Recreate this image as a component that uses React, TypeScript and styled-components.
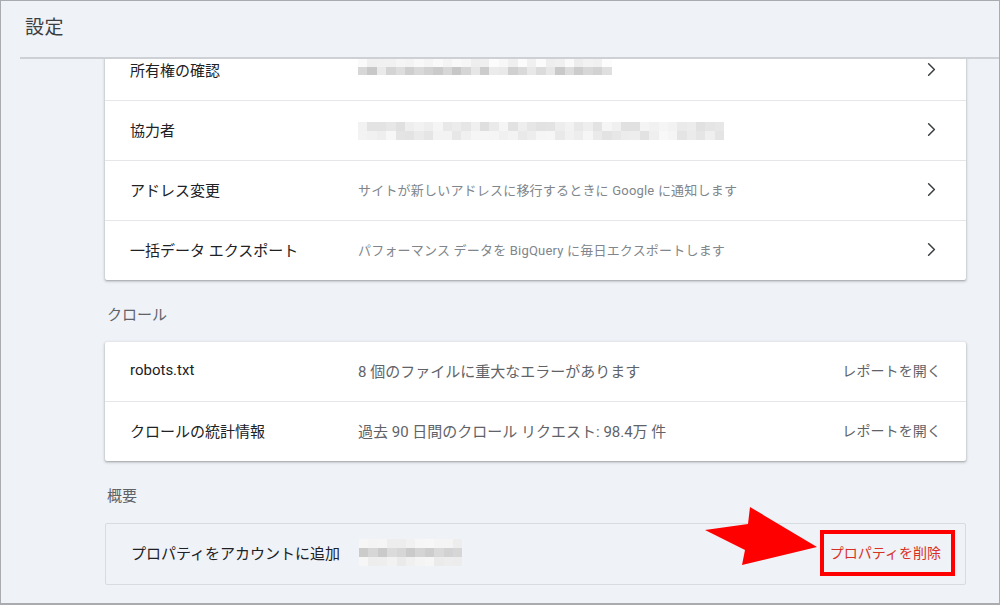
import React from 'react';
import styled, { createGlobalStyle } from 'styled-components';
import { ChevronRight } from 'lucide-react';

const GlobalStyle = createGlobalStyle`
  html, body {
    margin: 0;
    padding: 0;
    background: #eff2f7;
  }
  * {
    box-sizing: border-box;
  }
  body {
    font-family: Roboto, "Noto Sans CJK JP", "Noto Sans", sans-serif;
    -webkit-font-smoothing: antialiased;
  }
`;

// deterministic grey shades for the pixelated (blurred out) values
const shadeAt = (seed: number, i: number, lo: number, hi: number) => {
  const x = Math.sin(seed * 97.13 + i * 12.9898) * 43758.5453;
  const r = x - Math.floor(x);
  return Math.round(lo + r * (hi - lo));
};

type MosaicProps = {
  seed: number;
  cols: number;
  rows: { lo: number; hi: number }[];
  cell?: number;
  rowHeight?: number;
  offset?: number;
};

const Mosaic: React.FC<MosaicProps> = ({
  seed,
  cols,
  rows,
  cell = 9.4,
  rowHeight = 9,
  offset = 0,
}) => (
  <MosaicBox $offset={offset}>
    {rows.map((r, ri) => (
      <MosaicRow key={ri}>
        {Array.from({ length: cols }).map((_, ci) => {
          const g = shadeAt(seed + ri * 7, ci, r.lo, r.hi);
          return (
            <MosaicCell
              key={ci}
              style={{
                width: cell,
                height: rowHeight,
                background: `rgb(${g},${g},${g + 1})`,
              }}
            />
          );
        })}
      </MosaicRow>
    ))}
  </MosaicBox>
);

type SettingRow = { label: string; desc?: string; mosaic?: React.ReactNode };

const propertyRows: SettingRow[] = [
  {
    label: '所有権の確認',
    mosaic: (
      <Mosaic
        seed={3}
        cols={27}
        offset={-4}
        rows={[
          { lo: 236, hi: 252 },
          { lo: 196, hi: 236 },
        ]}
        rowHeight={8}
      />
    ),
  },
  {
    label: '協力者',
    mosaic: (
      <Mosaic
        seed={11}
        cols={39}
        offset={3}
        rows={[
          { lo: 222, hi: 246 },
          { lo: 226, hi: 248 },
        ]}
      />
    ),
  },
  {
    label: 'アドレス変更',
    desc: 'サイトが新しいアドレスに移行するときに Google に通知します',
  },
  {
    label: '一括データ エクスポート',
    desc: 'パフォーマンス データを BigQuery に毎日エクスポートします',
  },
];

const crawlRows = [
  { label: 'robots.txt', value: '8 個のファイルに重大なエラーがあります' },
  {
    label: 'クロールの統計情報',
    value: '過去 90 日間のクロール リクエスト: 98.4万 件',
  },
];

export default function App() {
  return (
    <>
      <GlobalStyle />
      <Frame>
        <Header>
          <PageTitle>設定</PageTitle>
        </Header>
        <Content>
          <Inner>
            <Card>
              {propertyRows.map((row) => (
                <Row key={row.label}>
                  <Label>{row.label}</Label>
                  <Value>
                    {row.mosaic ?? <Desc>{row.desc}</Desc>}
                  </Value>
                  <ChevronBox>
                    <ChevronRight size={23} strokeWidth={1.6} />
                  </ChevronBox>
                </Row>
              ))}
            </Card>

            <SectionTitle>クロール</SectionTitle>
            <Card>
              {crawlRows.map((row) => (
                <Row key={row.label}>
                  <Label>{row.label}</Label>
                  <Value>
                    <Stat>{row.value}</Stat>
                  </Value>
                  <ReportLink>レポートを開く</ReportLink>
                </Row>
              ))}
            </Card>

            <SectionTitle>概要</SectionTitle>
            <OutlinedCard>
              <Row $last>
                <Label>プロパティをアカウントに追加</Label>
                <Value>
                  <Mosaic
                    seed={21}
                    cols={11}
                    offset={0}
                    rows={[
                      { lo: 236, hi: 248 },
                      { lo: 198, hi: 222 },
                      { lo: 230, hi: 246 },
                    ]}
                  />
                </Value>
                <DeleteWrap>
                  <ArrowMark viewBox="0 0 115 60" width={115} height={60}>
                    <polygon
                      points="0,23 43,17 45,0 112,40 37,58 40,43"
                      fill="#ff0000"
                    />
                  </ArrowMark>
                  <DeleteLink>プロパティを削除</DeleteLink>
                </DeleteWrap>
              </Row>
            </OutlinedCard>
          </Inner>
        </Content>
      </Frame>
    </>
  );
}

const Frame = styled.div`
  width: 1000px;
  height: 605px;
  border: 1px solid #a9abae;
  border-bottom-width: 2px;
  background: #eff2f7;
  display: flex;
  flex-direction: column;
  overflow: hidden;
`;

const Header = styled.header`
  position: relative;
  z-index: 2;
  flex-shrink: 0;
  height: 57px;
  display: flex;
  align-items: center;
  padding: 0 0 3px 24px;
  background: #eff2f7;

  &:after {
    content: '';
    position: absolute;
    left: 19px;
    right: 0;
    bottom: -1px;
    height: 2px;
    background: #cdd1d6;
  }
`;

const PageTitle = styled.h1`
  margin: 0;
  font-size: 19px;
  line-height: 24px;
  font-weight: 400;
  color: #3c4043;
  letter-spacing: 0.5px;
`;

const Content = styled.main`
  flex: 1;
  overflow: hidden;
  padding: 0 33px 0 104px;
`;

const Inner = styled.div`
  margin-top: -17px;
`;

const Card = styled.section`
  background: #fff;
  border-radius: 2px;
  box-shadow: 0 1px 2px rgba(60, 64, 67, 0.35),
    0 1px 3px 1px rgba(60, 64, 67, 0.12);
`;

const OutlinedCard = styled.section`
  border: 1px solid #d8dbe0;
  border-radius: 2px;
`;

const Row = styled.div<{ $last?: boolean }>`
  height: 60px;
  display: flex;
  align-items: center;
  padding: 0 22px 3px 25px;
  border-bottom: 1px solid #e4e6e9;

  &:last-child {
    border-bottom: none;
    height: ${(p) => (p.$last ? '60px' : '59px')};
  }
`;

const Label = styled.div`
  width: 228px;
  flex-shrink: 0;
  font-size: 15px;
  color: #202124;
`;

const Value = styled.div`
  flex: 1;
  display: flex;
  align-items: center;
  min-width: 0;
`;

const Desc = styled.span`
  font-size: 13px;
  color: #80868b;
  letter-spacing: 0.2px;
`;

const Stat = styled.span`
  font-size: 15px;
  color: #5f6368;
`;

const ChevronBox = styled.div`
  display: flex;
  align-items: center;
  color: #3c4043;
  margin-right: 1px;
`;

const ReportLink = styled.span`
  font-size: 14px;
  color: #5f6368;
  padding-right: 3px;
  letter-spacing: 0.1px;
`;

const SectionTitle = styled.h2`
  margin: 25px 0 17px 2px;
  font-size: 15px;
  line-height: 20px;
  font-weight: 400;
  color: #5f6368;
`;

const MosaicBox = styled.div<{ $offset: number }>`
  display: flex;
  flex-direction: column;
  margin-top: ${(p) => p.$offset}px;
  filter: blur(0.4px);
`;

const MosaicRow = styled.div`
  display: flex;
`;

const MosaicCell = styled.span`
  display: block;
  flex-shrink: 0;
`;

const DeleteWrap = styled.div`
  position: relative;
  display: flex;
  align-items: center;
  margin-right: 2px;

  &:after {
    content: '';
    position: absolute;
    left: -10px;
    right: -14px;
    top: -13px;
    bottom: -13px;
    border: 4px solid #ff0000;
    pointer-events: none;
  }
`;

const DeleteLink = styled.span`
  font-size: 14px;
  line-height: 20px;
  color: #d93025;
`;

const ArrowMark = styled.svg`
  position: absolute;
  left: -125px;
  top: -36px;
  overflow: visible;
`;
